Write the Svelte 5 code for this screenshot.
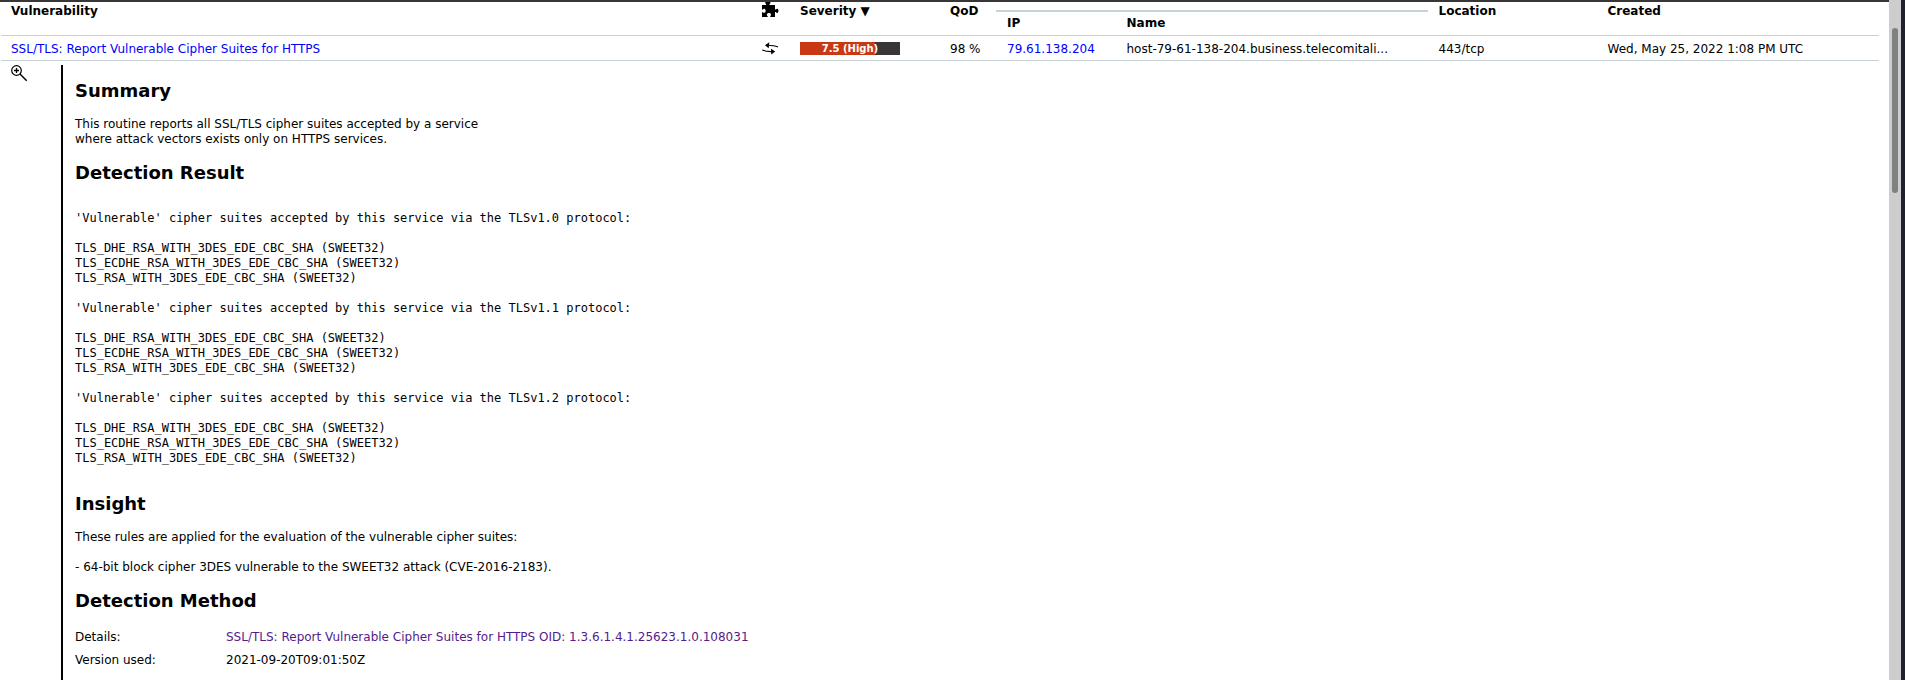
<script>
  const versions = ['1.0', '1.1', '1.2'];
  const suites = ['TLS_DHE_RSA', 'TLS_ECDHE_RSA', 'TLS_RSA'];
  const detection = versions
    .map((v) =>
      [
        `'Vulnerable' cipher suites accepted by this service via the TLSv${v} protocol:`,
        '',
        ...suites.map((s) => `${s}_WITH_3DES_EDE_CBC_SHA (SWEET32)`)
      ].join('\n')
    )
    .join('\n\n');
  const severity = 7.5;
</script>

<div class="app">
  <main>
    <div class="topbar"></div>
    <div class="row head">
      <span>Vulnerability</span>
      <svg class="puzzle" width="17" height="17" viewBox="0 0 17 17">
        <path d="M0 4H4.2V3.2C3.4 2.7 3.1 2 3.3 1.2C3.6 -.5 8.1 -.5 8.4 1.2C8.5 2 8.2 2.7 7.4 3.2V4H13V8.6H13.9C14.4 7.7 15.2 7.5 15.8 7.9C16.7 8.6 16.7 11 15.8 11.7C15.2 12.1 14.4 11.9 13.9 11H13V16H8.3V15.2C9.3 14.5 9.2 12.6 7.8 12.1C6.8 11.8 5.6 12 5.1 12.8C4.6 13.6 4.9 14.7 5.7 15.2V16H0V11.2H.9C1.5 12 2.6 12 3.2 11.3C3.9 10.4 3.7 8.7 2.9 8.1C2.2 7.6 1.4 7.8 .9 8.5H0Z" />
      </svg>
      <span>Severity ▼</span>
      <span>QoD</span>
      <div class="hostgroup">
        <div class="host">Host</div>
        <div class="pair"><span>IP</span><span>Name</span></div>
      </div>
      <span>Location</span>
      <span>Created</span>
    </div>

    <div class="row result">
      <a href="#vuln">SSL/TLS: Report Vulnerable Cipher Suites for HTTPS</a>
      <svg class="arrows" width="17" height="14" viewBox="0 0 17 14">
        <path d="M16 5C13 3.6 9 3.1 4 3.2M.2 8C4 9.5 8 9.8 12 9.5" fill="none" stroke="#000" stroke-width="1.1" />
        <path d="M3 3.2L7.3 .2L6.7 6.2ZM13.2 9.6L9 6.7L9.2 12.6Z" />
      </svg>
      <div class="meter">
        <div class="fill" style="width: {severity * 10}%"></div>
        <span>{severity} (High)</span>
      </div>
      <span>98 %</span>
      <div class="pair"><a href="#host">79.61.138.204</a><span>host-79-61-138-204.business.telecomitali...</span></div>
      <span>443/tcp</span>
      <span>Wed, May 25, 2022 1:08 PM UTC</span>
    </div>

    <div class="details">
      <div class="tool">
        <svg width="17" height="17" viewBox="0 0 17 17" fill="none" stroke="#000">
          <circle cx="5.5" cy="5.5" r="4.8" stroke-width="1.2" />
          <path d="M3 5.5H8M5.5 3V8" stroke-width="1.3" />
          <path d="M9 9L15.7 15.7" stroke-width="1.5" />
        </svg>
      </div>
      <article>
        <h2>Summary</h2>
        <p>This routine reports all SSL/TLS cipher suites accepted by a service<br />where attack vectors exists only on HTTPS services.</p>
        <h2>Detection Result</h2>
        <pre>{detection}</pre>
        <h2>Insight</h2>
        <p>These rules are applied for the evaluation of the vulnerable cipher suites:<br /><br />- 64-bit block cipher 3DES vulnerable to the SWEET32 attack (CVE-2016-2183).</p>
        <h2>Detection Method</h2>
        <dl>
          <dt>Details:</dt>
          <dd><a class="visited" href="#oid">SSL/TLS: Report Vulnerable Cipher Suites for HTTPS OID: 1.3.6.1.4.1.25623.1.0.108031</a></dd>
          <dt>Version used:</dt>
          <dd>2021-09-20T09:01:50Z</dd>
        </dl>
      </article>
    </div>
  </main>
  <div class="scrollbar"><div class="thumb"></div></div>
  <div class="edge"></div>
</div>

<style>
  :global(body) { margin: 0; overflow: hidden; }
  .app {
    display: flex;
    height: 680px;
    overflow: hidden;
    background: #fff;
    color: #000;
    font: 12px/15px "DejaVu Sans", sans-serif;
    white-space: nowrap;
  }
  main { flex: 1; min-width: 0; display: flex; flex-direction: column; }
  .topbar { height: 2px; flex: none; background: #393637; position: relative; z-index: 1; }
  a { color: #0000ff; text-decoration: none; }
  a.visited { color: #551a8b; }
  svg { display: block; }
  .row {
    display: grid;
    grid-template-columns: 751px 38px 150px 46px 442.5px 169px 1fr;
    box-sizing: border-box;
    flex: none;
    margin: 0 10px 0 1px;
    padding-left: 10px;
    border-bottom: 1px solid #c8d3d9;
  }
  .head { height: 34px; font-weight: bold; padding-top: 2px; }
  .puzzle { margin-top: -3px; }
  .hostgroup { margin-top: -13px; }
  .host { padding-left: 11px; width: 421px; height: 19px; border-bottom: 2px solid #c8d3d9; }
  .pair { display: grid; grid-template-columns: 119.5px 1fr; padding-left: 11px; }
  .hostgroup .pair { padding-top: 4px; }
  .result { height: 25px; padding-top: 6px; }
  .arrows { margin-top: 0; }
  .meter {
    position: relative;
    width: 100px;
    height: 13px;
    background: #393637;
    color: #fff;
    font-size: 10px;
    line-height: 13px;
    font-weight: bold;
    text-align: center;
  }
  .fill { height: 13px; background: #c83814; }
  .meter span { position: absolute; inset: 0; }
  .details { display: flex; flex: 1; min-height: 0; padding-top: 4px; }
  .tool { width: 50px; padding-left: 11px; flex: none; }
  article { flex: 1; border-left: 2px solid #000; padding: 15px 0 0 12px; }
  h2 { margin: 0 0 15px; font-size: 18px; line-height: 22px; }
  p { margin: 0 0 15px; }
  pre { margin: 27px 0; font: 12px/15px "DejaVu Sans Mono", monospace; }
  dl { display: grid; grid-template-columns: 151px 1fr; row-gap: 8px; margin: 18px 0 0; }
  dd { margin: 0; }
  .scrollbar { width: 12px; background: #cdcdcd; padding-top: 28px; box-sizing: border-box; }
  .thumb { width: 6px; height: 165px; margin-left: 3px; border-radius: 3px; background: #7d8180; }
  .edge { width: 4px; background: #1e222c; }
</style>
